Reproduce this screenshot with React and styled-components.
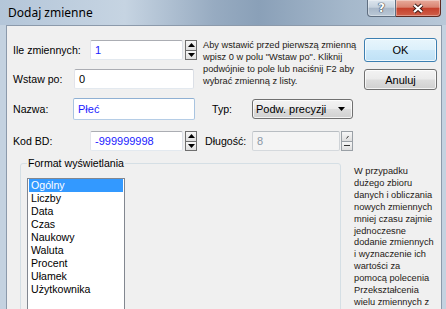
import React from 'react';
import styled, { createGlobalStyle } from 'styled-components';

const GlobalStyle = createGlobalStyle`
  body { margin: 0; background: #fff; }
  * { box-sizing: border-box; }
`;

const Window = styled.div`
  width: 446px;
  height: 309px;
  overflow: hidden;
  display: flex;
  flex-direction: column;
  font-family: "Liberation Sans", Arial, sans-serif;
  font-size: 10.6px;
  color: #000;
  background: #c4d2e0;
`;

const TitleBar = styled.div`
  height: 25px;
  flex: none;
  display: flex;
  align-items: flex-start;
  padding-right: 5px;
  background: linear-gradient(90deg, #b4c6d9 0%, #c6d4e2 28%, #97abc1 48%, #8aa0b8 58%, #a5b8cb 78%, #b8c8d8 100%);
`;

const Title = styled.div`
  font-family: "Noto Sans", "Open Sans", sans-serif;
  font-size: 12px;
  line-height: 26px;
  padding-left: 8px;
`;

const Captions = styled.div`
  margin-left: auto;
  display: flex;
`;

const CaptionButton = styled.div`
  width: ${p => p.$w}px;
  height: 17px;
  display: flex;
  align-items: center;
  justify-content: center;
  border: 1px solid ${p => (p.$close ? '#5e2a22' : '#5f6e80')};
  border-top: none;
  border-left-width: ${p => (p.$close ? 0 : 1)}px;
  border-radius: ${p => (p.$close ? '0 0 4px 0' : '0 0 0 4px')};
  background: ${p =>
    p.$close
      ? 'linear-gradient(#e8ab9c 0%, #d98471 45%, #c5412c 52%, #d0604a 100%)'
      : 'linear-gradient(#dde5ee 0%, #c6d2de 45%, #a9b8c9 52%, #bac8d6 100%)'};
  box-shadow: inset 0 0 0 1px rgba(255, 255, 255, 0.35);
`;

const HelpGlyph = styled.span`
  font-family: "DejaVu Sans", sans-serif;
  font-weight: bold;
  font-size: 12px;
  line-height: 1;
  color: #fff;
  text-shadow: 0 0 1px #2d3a48, 0 0 1px #2d3a48, 0 0 1px #2d3a48;
`;

const Body = styled.div`
  flex: 1;
  min-height: 0;
  display: flex;
  padding: 0 4px 0 6px;
`;

const Client = styled.div`
  flex: 1;
  display: flex;
  flex-direction: column;
  background: #f0f0f0;
  border: 1px solid #8c9aab;
  border-bottom: none;
`;

const TopGrid = styled.div`
  display: grid;
  grid-template-columns: 184px 155px 73px;
  grid-template-rows: 24px 29px 30px 32px;
  column-gap: 6px;
  align-items: end;
  margin: 12px 0 0 6px;
`;

const FieldRow = styled.div`
  grid-column: ${p => p.$col};
  grid-row: ${p => p.$row};
  height: 24px;
  display: flex;
  align-items: center;
  padding-left: ${p => p.$indent || 0}px;
`;

const Label = styled.span`
  flex: none;
  width: ${p => p.$w}px;
  white-space: nowrap;
  font-size: 10.6px;
`;

const TextBox = styled.div`
  flex: none;
  width: ${p => p.$w}px;
  height: ${p => p.$h || 20}px;
  display: flex;
  align-items: center;
  padding: 0 4px;
  font-size: 11px;
  background: ${p => (p.$disabled ? '#f4f4f4' : '#fff')};
  color: ${p => (p.$disabled ? '#8b98a6' : p.$typed ? '#1a1aff' : '#000')};
  border: 1px solid;
  border-radius: 2px;
  border-color: ${p =>
    p.$focus
      ? '#8fb0d3 #a9c4e0 #b5cde6 #a9c4e0'
      : p.$disabled
      ? '#b8bdc2 #cfd3d7 #d5d9dd #cfd3d7'
      : '#abadb3 #dbdfe6 #e3e9ef #e2e3ea'};
`;

const Spin = styled.div`
  flex: none;
  width: 12px;
  height: 20px;
  margin-left: ${p => p.$gap}px;
  display: flex;
  flex-direction: column;
`;

const SpinHalf = styled.div`
  flex: 1;
  display: flex;
  align-items: center;
  justify-content: center;
  border: 1px solid ${p => (p.$disabled ? '#9aa0a6' : '#6f6f6f')};
  border-top-width: ${p => (p.$bottom ? 0 : 1)}px;
  background: linear-gradient(#f7f7f7, #dedede);
`;

const HelpText = styled.div`
  grid-column: 2;
  grid-row: 1 / span 2;
  align-self: start;
  margin-top: 2px;
  font-size: 9.25px;
  line-height: 11.9px;
  color: #1e1a16;
  white-space: nowrap;
`;

const Button = styled.div`
  grid-column: 3;
  grid-row: ${p => p.$row};
  height: ${p => p.$h}px;
  margin-bottom: ${p => p.$mb || 0}px;
  display: flex;
  align-items: center;
  justify-content: center;
  font-size: 11px;
  border: 1px solid ${p => (p.$default ? '#3c7fb1' : '#707070')};
  border-radius: 3px;
  background: ${p =>
    p.$default
      ? 'linear-gradient(#e8f5fc 0%, #dcf0fb 48%, #cbe8f9 52%, #bfe1f6 100%)'
      : 'linear-gradient(#f3f3f3 0%, #ebebeb 48%, #dddddd 52%, #d0d0d0 100%)'};
  box-shadow: inset 0 0 0 1px rgba(255, 255, 255, 0.75);
`;

const Select = styled.div`
  flex: none;
  width: 101px;
  height: 20px;
  display: flex;
  align-items: center;
  justify-content: space-between;
  padding: 0 7px 0 3px;
  font-size: 11px;
  border: 1px solid #707070;
  border-radius: 3px;
  background: linear-gradient(#f3f3f3 0%, #ebebeb 48%, #dddddd 52%, #d0d0d0 100%);
  box-shadow: inset 0 0 0 1px rgba(255, 255, 255, 0.75);
`;

const Bottom = styled.div`
  flex: 1;
  min-height: 0;
  display: flex;
  align-items: flex-start;
  gap: 13px;
  margin-top: 4px;
  padding-left: 13px;
`;

const GroupBox = styled.fieldset`
  flex: none;
  width: 321px;
  height: 200px;
  margin: 0;
  padding: 8px 0 0 6px;
  min-width: 0;
  border: 1px solid #d5dfe5;
  border-radius: 3px;
`;

const Legend = styled.legend`
  padding: 0 1px;
  font-size: 10.6px;
  line-height: 13px;
`;

const ListBox = styled.div`
  width: 98px;
  height: 160px;
  padding: 0 1px;
  background: #fff;
  border: 1px solid #828790;
`;

const ListItem = styled.div`
  height: 13px;
  line-height: 13px;
  padding-left: 2px;
  font-size: 10.6px;
  background: ${p => (p.$selected ? '#3399ff' : 'transparent')};
  color: ${p => (p.$selected ? '#fff' : '#000')};
`;

const SideNote = styled.div`
  flex: none;
  width: 86px;
  margin-top: 9px;
  font-size: 9.25px;
  line-height: 11.9px;
  color: #1e1a16;
  white-space: nowrap;
`;

const Arrow = ({ down, color = '#000' }) => (
  <svg width="7" height="4" viewBox="0 0 7 4">
    <path d={down ? 'M0 0H7L3.5 4Z' : 'M0 4H7L3.5 0Z'} fill={color} />
  </svg>
);

const SpinButtons = ({ gap = 2, disabled }) => (
  <Spin $gap={gap}>
    <SpinHalf $disabled={disabled}>
      {disabled ? (
        <svg width="8" height="7" viewBox="0 0 8 7">
          <path d="M3.5 5.5L5.5 3" stroke="#333" strokeWidth="1" />
        </svg>
      ) : (
        <Arrow />
      )}
    </SpinHalf>
    <SpinHalf $bottom $disabled={disabled}>
      {disabled ? (
        <svg width="8" height="7" viewBox="0 0 8 7">
          <path d="M1 3.5H7" stroke="#333" strokeWidth="1" />
        </svg>
      ) : (
        <Arrow down />
      )}
    </SpinHalf>
  </Spin>
);

const formats = ['Ogólny', 'Liczby', 'Data', 'Czas', 'Naukowy', 'Waluta', 'Procent', 'Ułamek', 'Użytkownika'];

const helpLines = [
  'Aby wstawić przed pierwszą zmienną',
  'wpisz 0 w polu "Wstaw po". Kliknij',
  'podwójnie to pole lub naciśnij F2 aby',
  'wybrać zmienną z listy.',
];

const noteLines = [
  'W przypadku',
  'dużego zbioru',
  'danych i obliczania',
  'nowych zmiennych',
  'mniej czasu zajmie',
  'jednoczesne',
  'dodanie zmiennych',
  'i wyznaczenie ich',
  'wartości za',
  'pomocą polecenia',
  'Przekształcenia',
  'wielu zmiennych z',
];

export default function App() {
  return (
    <>
      <GlobalStyle />
      <Window>
        <TitleBar>
          <Title>Dodaj zmienne</Title>
          <Captions>
            <CaptionButton $w={29}>
              <HelpGlyph>?</HelpGlyph>
            </CaptionButton>
            <CaptionButton $w={45} $close>
              <svg width="14" height="11" viewBox="0 0 14 11">
                <path d="M3 2L11 9M11 2L3 9" stroke="#3a1812" strokeWidth="4" />
                <path d="M3 2L11 9M11 2L3 9" stroke="#fff" strokeWidth="2.2" />
              </svg>
            </CaptionButton>
          </Captions>
        </TitleBar>
        <Body>
          <Client>
            <TopGrid>
              <FieldRow $col={1} $row={1}>
                <Label $w={77}>Ile zmiennych:</Label>
                <TextBox $w={93} $typed>1</TextBox>
                <SpinButtons />
              </FieldRow>
              <FieldRow $col={1} $row={2}>
                <Label $w={61}>Wstaw po:</Label>
                <TextBox $w={120}>0</TextBox>
              </FieldRow>
              <FieldRow $col={1} $row={3}>
                <Label $w={60}>Nazwa:</Label>
                <TextBox $w={122} $h={22} $typed $focus>Płeć</TextBox>
              </FieldRow>
              <FieldRow $col={1} $row={4}>
                <Label $w={77}>Kod BD:</Label>
                <TextBox $w={93} $typed>-999999998</TextBox>
                <SpinButtons />
              </FieldRow>

              <HelpText>
                {helpLines.map(l => (
                  <div key={l}>{l}</div>
                ))}
              </HelpText>
              <FieldRow $col={2} $row={3} $indent={9}>
                <Label $w={40}>Typ:</Label>
                <Select>
                  <span>Podw. precyzji</span>
                  <Arrow down />
                </Select>
              </FieldRow>
              <FieldRow $col={2} $row={4} $indent={2}>
                <Label $w={47}>Długość:</Label>
                <TextBox $w={88} $disabled>8</TextBox>
                <SpinButtons gap={1} disabled />
              </FieldRow>

              <Button $row={1} $h={24} $default>OK</Button>
              <Button $row={2} $h={21} $mb={1}>Anuluj</Button>
            </TopGrid>

            <Bottom>
              <GroupBox>
                <Legend>Format wyświetlania</Legend>
                <ListBox>
                  {formats.map((f, i) => (
                    <ListItem key={f} $selected={i === 0}>{f}</ListItem>
                  ))}
                </ListBox>
              </GroupBox>
              <SideNote>
                {noteLines.map(l => (
                  <div key={l}>{l}</div>
                ))}
              </SideNote>
            </Bottom>
          </Client>
        </Body>
      </Window>
    </>
  );
}
